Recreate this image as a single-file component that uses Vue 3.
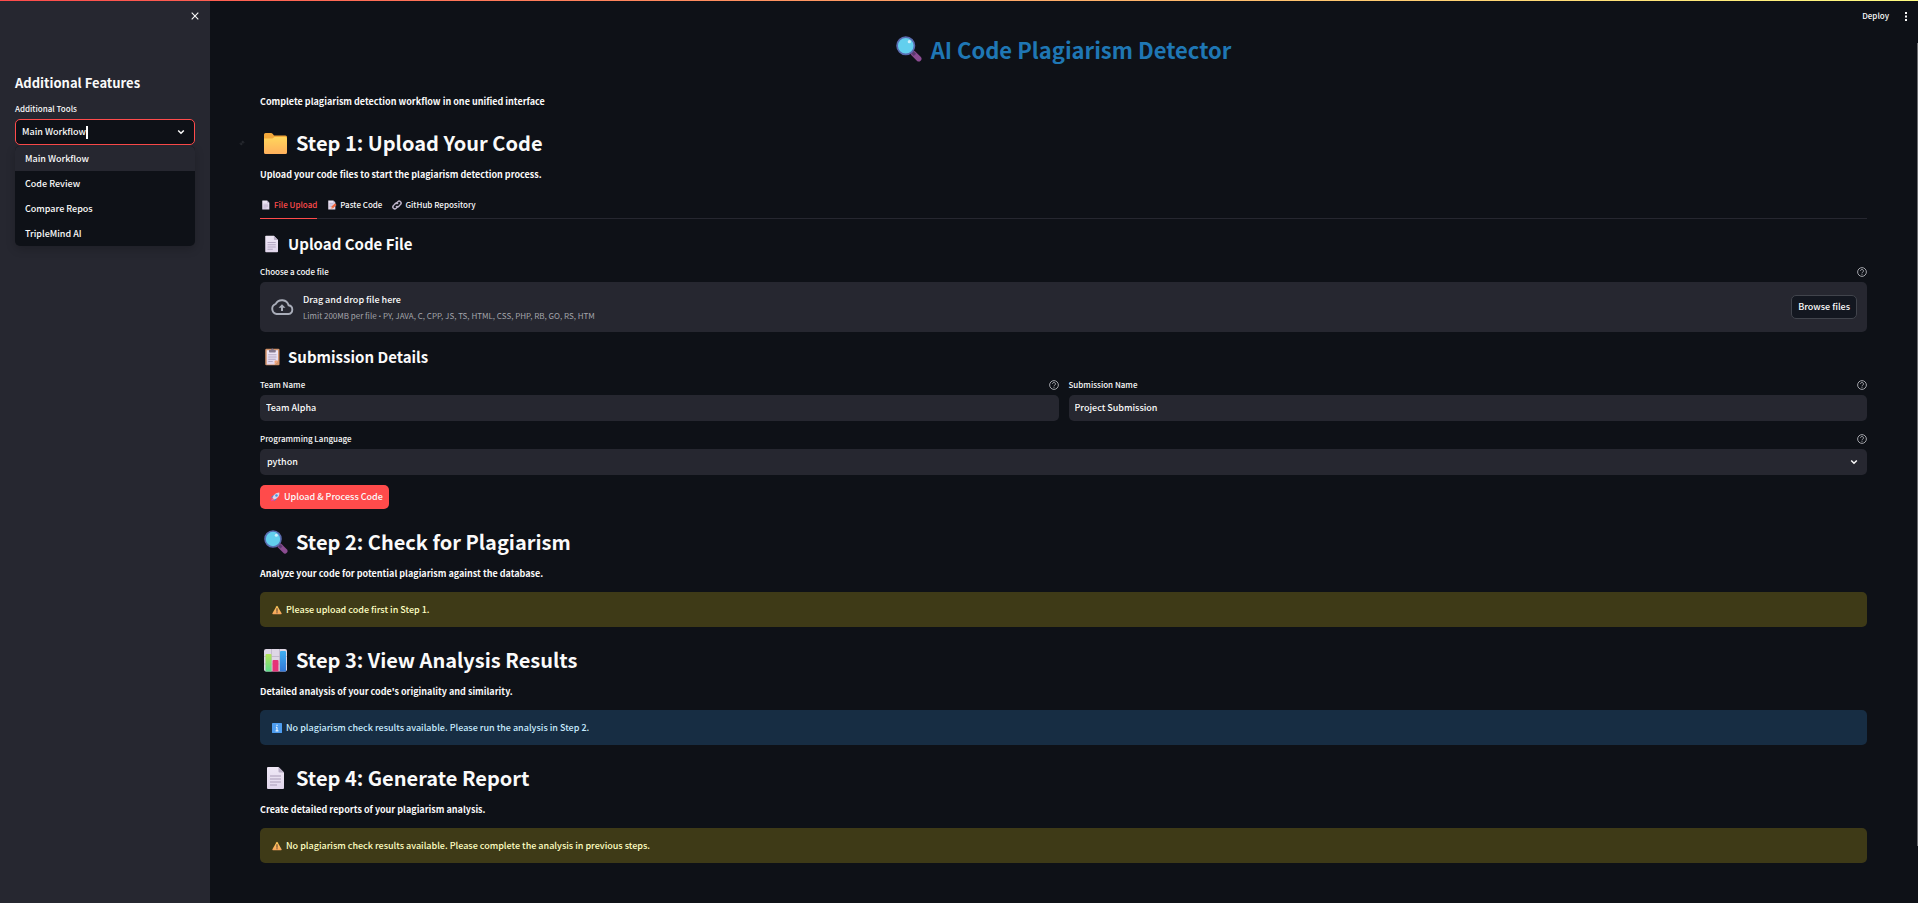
<script setup>
import { ref } from 'vue'

const tools = ['Main Workflow', 'Code Review', 'Compare Repos', 'TripleMind AI']
const tool = ref('Main Workflow')
const team = ref('Team Alpha')
const submission = ref('Project Submission')
const language = ref('python')
const tabs = [
  { icon: 'page', label: 'File Upload' },
  { icon: 'memo', label: 'Paste Code' },
  { icon: 'link', label: 'GitHub Repository' },
]
const activeTab = ref('File Upload')
const steps = [
  { icon: 'lens', title: 'Step 2: Check for Plagiarism', text: 'Analyze your code for potential plagiarism against the database.', kind: 'warning', note: 'Please upload code first in Step 1.' },
  { icon: 'chart', title: 'Step 3: View Analysis Results', text: "Detailed analysis of your code's originality and similarity.", kind: 'info', note: 'No plagiarism check results available. Please run the analysis in Step 2.' },
  { icon: 'page', title: 'Step 4: Generate Report', text: 'Create detailed reports of your plagiarism analysis.', kind: 'warning', note: 'No plagiarism check results available. Please complete the analysis in previous steps.' },
]
</script>

<template>
  <svg class="defs" aria-hidden="true">
    <defs>
      <linearGradient id="gFolder" x1="0" y1="0" x2="0" y2="1"><stop offset="0" stop-color="#ffd65c" /><stop offset="1" stop-color="#ffb05c" /></linearGradient>
      <linearGradient id="gPage" x1="0" y1="0" x2="0" y2="1"><stop offset="0" stop-color="#efe8f6" /><stop offset="1" stop-color="#e1d6ec" /></linearGradient>
      <linearGradient id="gGreen" x1="0" y1="0" x2="0" y2="1"><stop offset="0" stop-color="#b4e45a" /><stop offset="1" stop-color="#5edb8c" /></linearGradient>
      <linearGradient id="gBlue" x1="0" y1="0" x2="0" y2="1"><stop offset="0" stop-color="#3fb0f4" /><stop offset="1" stop-color="#3477d6" /></linearGradient>
      <linearGradient id="gWarn" x1="0" y1="0" x2="0" y2="1"><stop offset="0" stop-color="#ffcb5a" /><stop offset="1" stop-color="#f5a35c" /></linearGradient>
      <symbol id="folder" viewBox="0 0 24 24">
        <path d="M0 3.500Q0 2 1.500 2H7q1 0 1.600.8L10 4.500h11.500q1.500 0 1.500 1.500V12H0z" fill="#f3a83a" />
        <path d="M0 7.500h8.500L10.500 6h11q1.500 0 1.500 1.500v14q0 1.500-1.500 1.500h-20Q0 23 0 21.500z" fill="url(#gFolder)" />
      </symbol>
      <symbol id="page" viewBox="0 0 24 24">
        <path d="M4 1h10.500L20 6.500V22q0 1-1 1H4q-1 0-1-1V2q0-1 1-1z" fill="url(#gPage)" />
        <path d="M14.500 1 20 6.500h-4.500q-1 0-1-1z" fill="#b9aec6" />
        <path d="M6 10h11M6 13h11M6 16h11M6 19h7" stroke="#a99cb8" stroke-width="1.100" fill="none" />
      </symbol>
      <symbol id="memo" viewBox="0 0 24 24">
        <path d="M3 1h12l5 5v17H3z" fill="url(#gPage)" />
        <path d="M15 1v5h5z" fill="#b9aec6" />
        <path d="M6 8h10M6 12h9M6 16h6" stroke="#a394b6" stroke-width="1.400" fill="none" />
        <path d="m9 21 1.500-5L19 8l4 4-8.500 8z" fill="#f0673f" />
        <path d="m9 21 1.500-5 4 4z" fill="#f4c8a0" />
      </symbol>
      <symbol id="link" viewBox="0 0 24 24">
        <g fill="none" stroke="#bdb4ca" stroke-width="3.400" stroke-linecap="round">
          <path d="m10 8.500 4-4.500a4.500 4.500 0 0 1 6.500 6.500l-4 4.500a4.500 4.500 0 0 1-6 .5" />
          <path d="m14 15.500-4 4.500a4.500 4.500 0 0 1-6.500-6.500l4-4.500a4.500 4.500 0 0 1 6-.5" />
        </g>
      </symbol>
      <symbol id="board" viewBox="0 0 24 24">
        <rect x="3" y="1" width="19" height="22" rx="1.500" fill="#d3936a" />
        <path d="M5 3h15v13.500L15.500 22H5z" fill="url(#gPage)" />
        <path d="M15.500 22v-4.500q0-1 1-1H20z" fill="#f3a374" />
        <path d="M8 5V2.500h2.500a2 2 0 0 1 4 0H17V5q0 1-1 1H9Q8 6 8 5z" fill="#85798f" />
        <path d="M7 9h11M7 12h11M7 15h10M7 18h6" stroke="#a99cb8" stroke-width="1.100" fill="none" />
      </symbol>
      <symbol id="lens" viewBox="0 0 24 24">
        <path d="m16 16 5 5" stroke="#8b4c91" stroke-width="5" stroke-linecap="round" />
        <path d="m14.500 14.500 3 3" stroke="#5b3b70" stroke-width="3" />
        <circle cx="9" cy="9" r="8" fill="#62cfee" stroke="#5a6cb0" stroke-width="1.600" />
        <circle cx="12.300" cy="5.300" r="1.500" fill="#cdeffb" />
      </symbol>
      <symbol id="chart" viewBox="0 0 24 24">
        <rect x="0" y="1" width="23" height="22.500" rx="2" fill="#ded7e6" />
        <path d="M7.500 1v22M15.500 1v22M0 8.500h23M0 16h23" stroke="#bcb4c8" stroke-width=".8" />
        <path d="M1.500 7q0-1 1-1h4q1 0 1 1v16.500h-6z" fill="url(#gGreen)" />
        <path d="M8.500 13q0-1 1-1h4q1 0 1 1v10.500h-6z" fill="#e63377" />
        <path d="M16 4q0-1 1-1h4q1 0 1 1v19.500h-6z" fill="url(#gBlue)" />
      </symbol>
      <symbol id="rocket" viewBox="0 0 24 24">
        <path d="M5 14 3 16l-1 6 6-1 3-3z" fill="#e9489b" />
        <path d="m4 20 4-5 2 2z" fill="#ffb05c" />
        <path d="m11 8-5 1-4 5 6-1zM16 13l-1 5-5 4 1-6z" fill="#4c86dd" />
        <path d="M22.500 1.500Q14 1 9 8l-3 6 4 4 6-3q7-5 6.500-13.500z" fill="#ddd3e8" />
        <circle cx="15.500" cy="8.500" r="3" fill="#3c9be8" />
      </symbol>
      <symbol id="warning" viewBox="0 0 24 24">
        <path d="M10.700 3q1.300-2 2.600 0L23 20q1 2-1 2H2q-2 0-1-2z" fill="url(#gWarn)" />
        <path d="M12 8v8" stroke="#5d4037" stroke-width="2.600" />
        <path d="M12 17.500V20" stroke="#5d4037" stroke-width="2.600" />
      </symbol>
      <symbol id="info" viewBox="0 0 24 24">
        <rect width="24" height="24" rx="1.500" fill="#4d9df0" />
        <path d="M12 4v3.200M9.500 10.200H12V19M8.500 19h7" stroke="#fff" stroke-width="2.400" fill="none" />
      </symbol>
      <symbol id="help" viewBox="0 0 24 24">
        <g fill="none" stroke="#a3a4aa" stroke-width="2.400">
          <circle cx="12" cy="12" r="10.500" />
          <path d="M8.500 9.500a3.500 3.500 0 1 1 5.500 2.700q-2 1.300-2 2.800M12 16.500v2.200" />
        </g>
      </symbol>
      <symbol id="chevron" viewBox="0 0 8 8">
        <path d="m1.200 2.500 2.800 2.800 2.800-2.800" fill="none" stroke="#fafafa" stroke-width="1.500" />
      </symbol>
    </defs>
  </svg>

  <div class="app">
    <div class="rainbow"></div>

    <aside class="sidebar">
      <div class="sidebar-top">
        <button class="plain" aria-label="Close sidebar">
          <svg class="cross" viewBox="0 0 8 8"><path d="m.7.7 6.600 6.600M7.300.7.7 7.300" stroke="#fafafa" stroke-width="1.100" /></svg>
        </button>
      </div>
      <h2>Additional Features</h2>
      <label class="label" for="tool">Additional Tools</label>
      <div class="combo">
        <div class="combo-box">
          <input id="tool" v-model="tool" type="text" role="combobox" aria-expanded="true" aria-controls="tool-list">
          <span class="caret"></span>
          <svg class="chev"><use href="#chevron" /></svg>
        </div>
        <ul id="tool-list" role="listbox">
          <li v-for="t in tools" :key="t" role="option" :aria-selected="t === tool" :class="{ picked: t === tool }" @click="tool = t">{{ t }}</li>
        </ul>
      </div>
    </aside>

    <main>
      <header class="toolbar">
        <button class="plain deploy">Deploy</button>
        <button class="plain" aria-label="Menu">
          <svg class="dots" viewBox="0 0 4 9"><path d="M1 0h2v2H1zM1 3.500h2v2H1zM1 7h2v2H1z" fill="#fafafa" /></svg>
        </button>
      </header>

      <h1><svg><use href="#lens" /></svg>AI Code Plagiarism Detector</h1>
      <p class="lead">Complete plagiarism detection workflow in one unified interface</p>

      <section>
        <h2>
          <svg class="anchor" viewBox="0 0 8 8"><path d="M3 5 5 3M3.500 2.500 5 1.500 6.500 3 5.500 4.500M2.500 3.500 1.500 5 3 6.500 4.500 5.500" fill="none" stroke="#36383f" /></svg>
          <svg><use href="#folder" /></svg>Step 1: Upload Your Code
        </h2>
        <p>Upload your code files to start the plagiarism detection process.</p>

        <div class="tabs" role="tablist">
          <button v-for="t in tabs" :key="t.label" role="tab" :aria-selected="t.label === activeTab" :class="{ active: t.label === activeTab }" @click="activeTab = t.label">
            <svg><use :href="'#' + t.icon" /></svg>{{ t.label }}
          </button>
        </div>

        <h3><svg><use href="#page" /></svg>Upload Code File</h3>
        <div class="field first">
          <div class="label-row"><label for="file">Choose a code file</label><svg><use href="#help" /></svg></div>
          <div class="dropzone">
            <svg class="cloud" viewBox="0 0 24 16">
              <path d="M6.500 15A5.300 5.300 0 0 1 5.800 4.800 7 7 0 0 1 18.600 6.300 4.400 4.400 0 0 1 18.500 15z" fill="none" stroke="#a9adb9" stroke-width="1.900" />
              <path d="M12 5.200 8.500 8.800H11V12h2V8.800h2.500z" fill="#a9adb9" />
            </svg>
            <div class="drop-text">
              <span>Drag and drop file here</span>
              <small>Limit 200MB per file <span class="bullet">•</span> PY, JAVA, C, CPP, JS, TS, HTML, CSS, PHP, RB, GO, RS, HTM</small>
            </div>
            <button id="file" class="browse">Browse files</button>
          </div>
        </div>

        <h3><svg><use href="#board" /></svg>Submission Details</h3>
        <div class="pair">
          <div class="field">
            <div class="label-row"><label for="team">Team Name</label><svg><use href="#help" /></svg></div>
            <input id="team" v-model="team" class="control" type="text">
          </div>
          <div class="field">
            <div class="label-row"><label for="submission">Submission Name</label><svg><use href="#help" /></svg></div>
            <input id="submission" v-model="submission" class="control" type="text">
          </div>
        </div>
        <div class="field">
          <div class="label-row"><label for="language">Programming Language</label><svg><use href="#help" /></svg></div>
          <div class="select">
            <select id="language" v-model="language" class="control"><option>python</option></select>
            <svg class="chev"><use href="#chevron" /></svg>
          </div>
        </div>
        <button class="primary"><svg><use href="#rocket" /></svg>Upload &amp; Process Code</button>
      </section>

      <section v-for="s in steps" :key="s.title">
        <h2><svg><use :href="'#' + s.icon" /></svg>{{ s.title }}</h2>
        <p>{{ s.text }}</p>
        <div class="alert" :class="s.kind" role="status"><svg><use :href="'#' + s.kind" /></svg>{{ s.note }}</div>
      </section>

      <div class="scrollbar"></div>
    </main>
  </div>
</template>

<style>
body { background: #0e1117; }
</style>

<style scoped>
* { box-sizing: border-box; }
.defs { position: absolute; width: 0; height: 0; }
.app {
  position: relative;
  display: flex;
  min-height: 100vh;
  background: #0e1117;
  color: #fafafa;
  font: 500 9px/16px "Noto Sans CJK SC", "Noto Sans", sans-serif;
}
svg { flex: none; display: block; }
h1, h2, h3, p, ul { margin: 0; padding: 0; }
button, input, select { font: inherit; color: inherit; }
.plain { padding: 0; border: 0; background: none; }
.rainbow {
  position: absolute;
  inset: 0 0 auto;
  height: 1px;
  background: linear-gradient(90deg, #ff4b4b, #fffd80);
}

.sidebar { width: 210px; flex: none; padding: 0 15px; background: #262730; }
.sidebar-top { display: flex; justify-content: flex-end; align-items: center; height: 32px; }
.cross { width: 8px; height: 8px; margin-right: -4px; }
.sidebar h2 { height: 24px; margin-top: 39px; font-size: 13px; line-height: 24px; font-weight: 600; }
.label { display: block; margin: 6px 0 2px; font-size: 8px; line-height: 16px; }
.combo { position: relative; }
.combo-box {
  display: flex;
  align-items: center;
  height: 26px;
  padding: 0 9px 0 6px;
  border: 1px solid #ff4b4b;
  border-radius: 5px;
  background: #0e1117;
}
.combo-box input { field-sizing: content; padding: 0 0 1px; border: 0; outline: 0; background: none; }
.caret { width: 2px; height: 13px; background: #fff; }
.chev { width: 8px; height: 8px; margin-left: auto; }
.combo ul {
  position: absolute;
  top: 100%;
  left: 0;
  right: 0;
  margin-top: 1px;
  border-radius: 5px;
  overflow: hidden;
  background: #0e1117;
  box-shadow: 0 3px 10px rgba(0, 0, 0, .2);
  list-style: none;
}
.combo li { height: 25px; padding: 0 10px; line-height: 26px; }
.combo li.picked { background: #262730; }

main { position: relative; flex: 1; min-width: 0; padding: 27px 51px 40px 50px; }
.toolbar { position: absolute; top: 8px; right: 10px; display: flex; align-items: center; gap: 15px; }
.deploy { font-size: 8px; line-height: 16px; }
.dots { width: 4px; height: 9px; }
h1 {
  display: flex;
  align-items: center;
  justify-content: center;
  gap: 9px;
  height: 44px;
  margin-bottom: 23px;
  color: #1f77b4;
  font-size: 22px;
  line-height: 44px;
  font-weight: 700;
}
h1 svg { width: 26px; height: 26px; }
p { font-weight: 700; }
section { margin-top: 10px; }
main h2 {
  position: relative;
  display: flex;
  align-items: center;
  gap: 8px;
  height: 47px;
  padding: 0 0 2px 4px;
  font-size: 20px;
  line-height: 45px;
  font-weight: 600;
}
main h2 svg { width: 24px; height: 24px; }
main h2 .anchor { position: absolute; left: -21px; width: 6px; height: 6px; }
.tabs { display: flex; gap: 9px; height: 26px; margin-top: 10px; border-bottom: 1px solid #262730; }
.tabs button {
  display: flex;
  align-items: center;
  gap: 3px;
  height: 26px;
  padding: 0 0 1px 1px;
  border: 0;
  border-bottom: 1px solid transparent;
  background: none;
  font-size: 8px;
}
.tabs svg { width: 10px; height: 10px; }
.tabs .active { color: #ff4b4b; border-color: #ff4b4b; }
h3 {
  display: flex;
  align-items: center;
  gap: 7px;
  height: 30px;
  margin: 10px 0 5px;
  padding-left: 3px;
  font-size: 15px;
  line-height: 30px;
  font-weight: 600;
}
h3 svg { width: 18px; height: 18px; }
.field { margin-top: 10px; }
.field.first, .pair .field { margin-top: 0; }
.pair { display: grid; grid-template-columns: 1fr 1fr; gap: 10px; }
.label-row { display: flex; justify-content: space-between; align-items: center; height: 16px; margin-bottom: 2px; font-size: 8px; }
.label-row svg { width: 10px; height: 10px; }
.dropzone { display: flex; align-items: center; gap: 9px; min-height: 50px; padding: 0 10px; border-radius: 5px; background: #262730; }
.cloud { width: 24px; height: 16px; }
.drop-text { display: flex; flex: 1; flex-direction: column; padding-top: 2px; }
.drop-text small { color: #a3a4aa; font-size: 8px; font-weight: 400; }
.bullet { font-family: Roboto, sans-serif; }
.browse { height: 24px; padding: 0 6px; border: 1px solid #41444c; border-radius: 5px; background: #131720; }
.control { display: block; width: 100%; height: 26px; padding: 0 6px 1px; border: 0; border-radius: 5px; background: #262730; }
.select { position: relative; }
.select .control { appearance: none; padding-left: 7px; }
.select .chev { position: absolute; top: 9px; right: 9px; }
.primary {
  display: flex;
  align-items: center;
  gap: 4px;
  height: 24px;
  margin-top: 10px;
  padding: 0 6px 0 10px;
  border: 0;
  border-radius: 5px;
  background: #ff4b4b;
}
.primary svg, .alert svg { width: 10px; height: 10px; }
.alert { display: flex; align-items: center; gap: 4px; min-height: 35px; margin-top: 10px; padding: 0 12px; border-radius: 5px; }
.alert.warning { background: #3e3a17; color: #ffffc2; }
.alert.info { background: #172d43; color: #c7ebff; }
.scrollbar { position: absolute; top: 43px; right: 0; bottom: 57px; width: 1px; background: #6b6c70; }
</style>
